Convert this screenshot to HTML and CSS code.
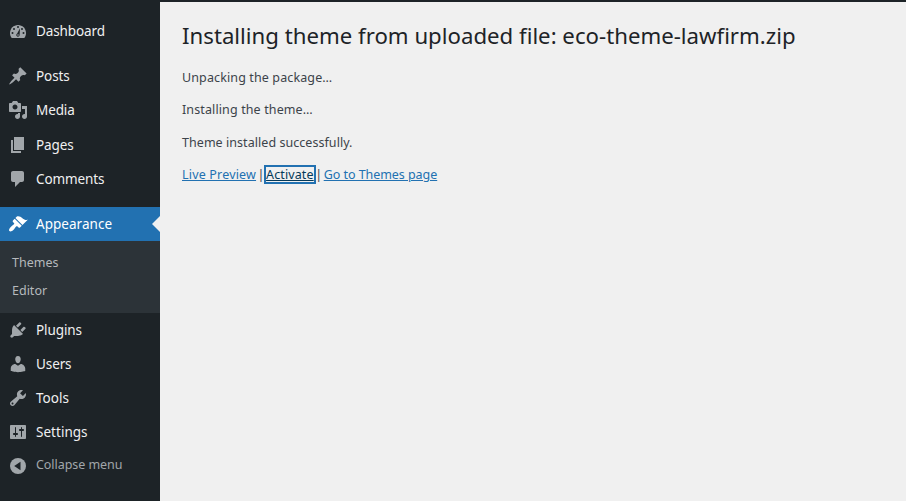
FILE: index.html
```
<!DOCTYPE html>
<html lang="en">
<head>
<meta charset="utf-8">
<title>Installing theme</title>
<link rel="stylesheet" href="styles.css">
</head>
<body>
<div class="toolbar"></div>
<div class="wrap">
<nav class="menu">
  <ul class="group">
    <li class="item"><svg viewBox="0 0 20 20"><path d="M3.76 17h12.48c1.1-1.37 1.76-3.11 1.76-5 0-4.42-3.58-8-8-8s-8 3.58-8 8c0 1.89.66 3.63 1.76 5z"/><g class="cut"><circle cx="10" cy="6" r="1"/><circle cx="6" cy="8" r="1"/><circle cx="14" cy="8" r="1"/><circle cx="4.5" cy="12" r="1"/><circle cx="15.5" cy="12" r="1"/><path d="M12 7.2L11.6 14c-.1 1-.8 1.7-1.7 1.7s-1.8-.8-1.6-1.9c.1-.6.5-1.1.9-1.4z"/></g><circle cx="10" cy="14" r=".8"/></svg><span>Dashboard</span></li>
  </ul>
  <ul class="group content">
    <li class="item"><svg viewBox="0 0 20 20"><path d="M10.44 3.02l1.82-1.82 6.36 6.35-1.83 1.82c-1.05-.68-2.48-.57-3.41.36l-.75.75c-.92.93-1.04 2.35-.35 3.41l-1.83 1.82-2.41-2.41-2.8 2.79c-.42.42-3.38 2.71-3.8 2.29s1.86-3.39 2.28-3.81l2.79-2.79L4.1 9.36l1.83-1.82c1.05.69 2.48.57 3.4-.36l.75-.75c.93-.92 1.05-2.35.36-3.41z"/></svg><span>Posts</span></li>
    <li class="item"><svg viewBox="0 0 20 20"><path d="M13 11V4c0-.55-.45-1-1-1h-1.67L9 1H5L3.67 3H2c-.55 0-1 .45-1 1v7c0 .55.45 1 1 1h10c.55 0 1-.45 1-1zM7 4.5c1.38 0 2.5 1.12 2.5 2.5S8.38 9.5 7 9.5 4.5 8.38 4.5 7 5.62 4.5 7 4.5zM14 6h5v10.5c0 1.38-1.12 2.5-2.5 2.5S14 17.88 14 16.5s1.12-2.5 2.5-2.5c.17 0 .34.02.5.05V9h-3V6zm-4 8.05V13h2v3.5c0 1.38-1.12 2.5-2.5 2.5S7 17.88 7 16.5 8.12 14 9.5 14c.17 0 .34.02.5.05z"/></svg><span>Media</span></li>
    <li class="item"><svg viewBox="0 0 20 20"><path d="M6 15V2h10v13H6zm-1 1h8v2H3V5h2v11z"/></svg><span>Pages</span></li>
    <li class="item"><svg viewBox="0 0 20 20"><path d="M5 2h9c1.1 0 2 .9 2 2v7c0 1.1-.9 2-2 2h-2l-5 5v-5H5c-1.1 0-2-.9-2-2V4c0-1.1.9-2 2-2z"/></svg><span>Comments</span></li>
  </ul>
  <ul class="group">
    <li class="item current"><svg viewBox="0 0 20 20"><path d="M14.48 11.06L7.41 3.99l1.5-1.5c.5-.56 2.3-.47 3.51.32 1.21.8 1.43 1.28 2.91 2.1 1.18.64 2.45 1.26 4.45.85zm-.71.71L6.7 4.7 4.93 6.47c-.39.39-.39 1.02 0 1.41l1.06 1.06c.39.39.39 1.03 0 1.42-.6.6-1.43 1.11-2.21 1.69-.35.26-.7.53-1.01.84C1.43 14.23.4 16.08 1.4 17.07c.99 1 2.84-.03 4.18-1.36.31-.31.58-.66.85-1.02.57-.78 1.08-1.61 1.69-2.21.39-.39 1.02-.39 1.41 0l1.06 1.06c.39.39 1.02.39 1.41 0z"/></svg><span class="wider">Appearance</span><i class="arrow"></i></li>
    <li><ul class="submenu"><li>Themes</li><li>Editor</li></ul></li>
    <li class="item"><svg viewBox="0 0 20 20"><path d="M13.11 4.36L9.87 7.6 8 5.73l3.24-3.24c.35-.34 1.05-.2 1.56.32.52.51.66 1.21.31 1.55zm-8 1.77l.91-1.12 9.01 9.01-1.19.84c-.71.71-2.63 1.16-3.82 1.16H6.14L4.9 17.26c-.59.59-1.54.59-2.12 0-.59-.58-.59-1.53 0-2.12l1.24-1.24v-3.88c0-1.13.4-3.19 1.09-3.89zm7.26 3.97l3.24-3.24c.34-.35 1.04-.21 1.55.31.52.51.66 1.21.31 1.55l-3.24 3.25z"/></svg><span>Plugins</span></li>
    <li class="item"><svg viewBox="0 0 20 20"><path d="M10 9.25c-2.27 0-2.73-3.44-2.73-3.44C7 4.02 7.82 2 9.97 2c2.16 0 2.98 2.02 2.71 3.81 0 0-.41 3.44-2.68 3.44zm0 2.57L12.72 10c2.39 0 4.52 2.33 4.52 4.53v2.49s-3.65 1.13-7.24 1.13c-3.65 0-7.24-1.13-7.24-1.13v-2.49c0-2.25 1.94-4.48 4.47-4.48z"/></svg><span>Users</span></li>
    <li class="item"><svg viewBox="0 0 20 20"><path d="M16.68 9.77c-1.34 1.34-3.3 1.67-4.95.99l-5.41 6.52c-.99.99-2.59.99-3.58 0s-.99-2.59 0-3.57l6.52-5.42c-.68-1.65-.35-3.61.99-4.95 1.28-1.28 3.12-1.62 4.72-1.06l-2.89 2.89 2.82 2.82 2.86-2.87c.53 1.58.18 3.39-1.08 4.65zM3.81 16.21c.4.39 1.04.39 1.43 0 .4-.4.4-1.04 0-1.43-.39-.4-1.03-.4-1.43 0-.39.39-.39 1.03 0 1.43z"/></svg><span class="wider">Tools</span></li>
    <li class="item"><svg viewBox="0 0 20 20"><path d="M18 16V4c0-.55-.45-1-1-1H3c-.55 0-1 .45-1 1v12c0 .55.45 1 1 1h14c.55 0 1-.45 1-1zM8 11h1c.55 0 1 .45 1 1s-.45 1-1 1H8v1.5c0 .28-.22.5-.5.5s-.5-.22-.5-.5V13H6c-.55 0-1-.45-1-1s.45-1 1-1h1V5.5c0-.28.22-.5.5-.5s.5.22.5.5V11zm5-2h-1c-.55 0-1-.45-1-1s.45-1 1-1h1V5.5c0-.28.22-.5.5-.5s.5.22.5.5V7h1c.55 0 1 .45 1 1s-.45 1-1 1h-1v5.5c0 .28-.22.5-.5.5s-.5-.22-.5-.5V9z"/></svg><span class="wider">Settings</span></li>
    <li class="item collapse"><svg viewBox="0 0 20 20"><circle cx="10" cy="10" r="8"/><path class="cut" d="M12.5 5.7v8.6L6.2 10z"/></svg><span>Collapse menu</span></li>
  </ul>
</nav>
<main class="main">
  <h1>Installing theme from uploaded file: eco-theme-lawfirm.zip</h1>
  <p>Unpacking the package…</p>
  <p>Installing the theme…</p>
  <p class="done">Theme installed successfully.</p>
  <p class="links"><a class="preview">Live Preview</a><span class="bar">|</span><a class="focus">Activate</a><span class="bar">|</span><a class="back">Go to Themes page</a></p>
</main>
</div>
</body>
</html>
```
FILE: styles.css
```
* { box-sizing: border-box; }
body { margin: 0; height: 501px; overflow: hidden; display: flex; flex-direction: column; background: #f0f0f0; font-family: "Noto Sans", sans-serif; font-size: 12.5px; color: #3c434a; }
ul { list-style: none; margin: 0; padding: 0; }
.toolbar { height: 2px; flex: none; background: #1d2327; }
.wrap { flex: 1; display: flex; }
.menu { width: 160px; flex: none; padding-top: 12px; background: #1d2327; }
.group { margin-bottom: 11px; }
.content .item { height: 34.25px; }
.item { position: relative; height: 34px; display: flex; align-items: center; padding-left: 8px; gap: 8px; color: #f0f0f1; font-size: 13.5px; line-height: 18px; letter-spacing: -.1px; white-space: nowrap; }
.item .wider { letter-spacing: .03px; }
.item svg { width: 20px; height: 20px; flex: none; fill: #a1a6aa; }
.item .cut { fill: #1d2327; }
.item.current { color: #fff; background: #2271b1; }
.current svg { fill: #fff; }
.arrow { position: absolute; right: 0; top: 9px; border: 8px solid transparent; border-left: 0; border-right-color: #f0f0f0; }
.submenu { height: 72px; padding: 8px 12px; background: #2c3338; color: #b5b9bc; font-size: 12.5px; }
.submenu li { height: 28px; line-height: 27px; }
.item.collapse { height: 33px; color: #a1a6aa; font-size: 12.5px; letter-spacing: -.05px; }
.collapse span { padding-bottom: 2px; }
.main { flex: 1; padding: 19px 22px; }
h1 { margin: 0 0 17px; font-size: 22.2px; line-height: 30px; font-weight: 400; color: #1d2327; white-space: nowrap; letter-spacing: .01px; }
p { margin: 0 0 13px; height: 19.4px; line-height: 19px; white-space: nowrap; letter-spacing: .12px; }
.done { letter-spacing: .05px; }
.links { display: flex; align-items: center; }
.links a { color: #2271b1; text-decoration: underline; line-height: 15px; }
.links .preview { letter-spacing: .18px; }
.links .bar { width: 10px; text-align: center; }
.links .focus { color: #043959; box-shadow: 0 0 0 2px #2271b1; }
.links .back { letter-spacing: -.05px; }
```
